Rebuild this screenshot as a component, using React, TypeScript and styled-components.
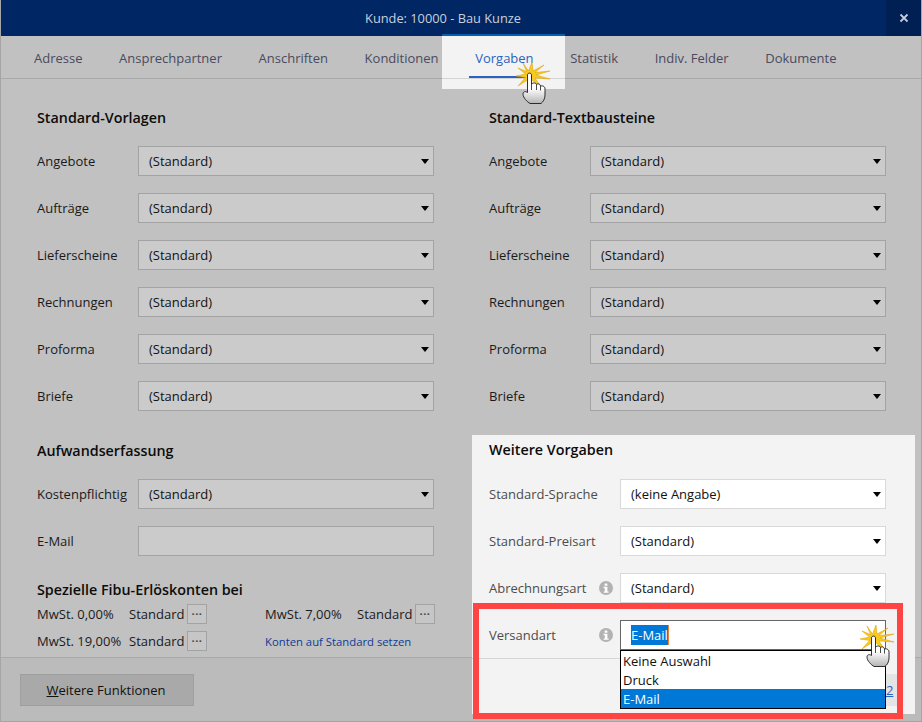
import React from "react";
import styled, { createGlobalStyle } from "styled-components";

const GlobalStyle = createGlobalStyle`
  html, body {
    margin: 0;
    padding: 0;
    background: #c1c1c1;
  }
  body {
    font-family: "Open Sans", "Noto Sans", sans-serif;
    font-size: 13px;
    color: #111;
  }
`;

const Window = styled.div`
  position: relative;
  width: 922px;
  height: 722px;
  overflow: hidden;
  display: flex;
  flex-direction: column;
  box-sizing: border-box;
  background: #c1c1c1;
  border-left: 1px solid #a5a5a5;
  border-right: 1px solid #a5a5a5;
  border-bottom: 1px solid #a5a5a5;
`;

const TitleBar = styled.header`
  height: 36px;
  margin: 0 -1px;
  padding-right: 36px;
  flex: none;
  display: flex;
  align-items: center;
  justify-content: center;
  position: relative;
  background: #002663;
  color: #c9d0dc;
  font-size: 12.8px;
`;

const CloseButton = styled.div`
  position: absolute;
  right: 0;
  top: 0;
  width: 36px;
  height: 36px;
  display: flex;
  align-items: center;
  justify-content: center;
  background: #001f52;
`;

const TabBar = styled.nav`
  height: 42px;
  flex: none;
  display: flex;
  align-items: center;
  gap: 36.6px;
  padding-left: 33px;
  border-bottom: 1px solid #a9a9a9;
  box-sizing: content-box;
`;

const Tab = styled.div<{ $active?: boolean }>`
  position: relative;
  z-index: ${(p) => (p.$active ? 2 : 0)};
  color: ${(p) => (p.$active ? "#2a63c0" : "#4a4a5e")};
  font-size: 13px;
  line-height: 40px;
  padding-top: 2px;
`;

const TabUnderline = styled.span`
  position: absolute;
  left: -6px;
  right: -6px;
  bottom: 0;
  height: 2px;
  background: #2a63c0;
`;

const Body = styled.main`
  flex: 1;
  display: grid;
  grid-template-columns: 397px 1fr;
  column-gap: 55px;
  padding: 26px 35px 0 36px;
  min-height: 0;
`;

const Column = styled.section`
  display: flex;
  flex-direction: column;
  min-width: 0;
`;

const Heading = styled.h2`
  margin: 0;
  font-size: 14.3px;
  font-weight: 600;
  line-height: 26px;
  color: #0c0c0c;
`;

const FormGrid = styled.div`
  margin-top: 15px;
  display: flex;
  flex-direction: column;
  gap: 17px;
`;

const Row = styled.div`
  display: flex;
  align-items: center;
  height: 30px;
`;

const Label = styled.div`
  width: 101px;
  flex: none;
  color: #1a1a1a;
  white-space: nowrap;
`;

const SelectBox = styled.div<{ $lit?: boolean }>`
  flex: 1;
  height: 30px;
  box-sizing: border-box;
  display: flex;
  align-items: center;
  justify-content: space-between;
  padding: 0 4px 0 10px;
  background: ${(p) => (p.$lit ? "#ffffff" : "#cbcbcb")};
  border: 1px solid ${(p) => (p.$lit ? "#d9d9d9" : "#a3a3a3")};
  color: #111;
`;

const Caret = styled.span`
  width: 0;
  height: 0;
  border-left: 4.5px solid transparent;
  border-right: 4.5px solid transparent;
  border-top: 5px solid #000;
`;

const Section = styled.div<{ $top: number }>`
  margin-top: ${(p) => p.$top}px;
`;

const Fibu = styled.div`
  display: grid;
  grid-template-columns: 92px 58px 20px 58px 92px 58px 20px;
  row-gap: 7px;
  align-items: center;
  margin-top: 1px;
  color: #1a1a1a;
`;

const DotsButton = styled.div`
  width: 20px;
  height: 20px;
  box-sizing: border-box;
  border: 1px solid #a3a3a3;
  background: #c6c6c6;
  display: flex;
  align-items: center;
  justify-content: center;
  color: #444;
  font-size: 11px;
  font-weight: 700;
  line-height: 10px;
  letter-spacing: 0.6px;
`;

const FibuLink = styled.div`
  grid-column: 5 / 8;
  color: #103a96;
  font-size: 11.3px;
`;

const Footer = styled.footer`
  height: 63px;
  flex: none;
  display: flex;
  align-items: center;
  padding: 0 19px;
  border-top: 1px solid #a9a9a9;
  background: #bbbbbb;
`;

const FooterButton = styled.div`
  width: 174px;
  height: 32px;
  box-sizing: border-box;
  display: flex;
  align-items: center;
  justify-content: center;
  border: 1px solid #9f9f9f;
  background: #a9a9a9;
  color: #111;
  padding-right: 2px;
`;

const Mnemonic = styled.span`
  text-decoration: underline;
`;

/* lit callouts lying over the dimmed dialog */
const TabSpot = styled.div`
  position: absolute;
  left: 441px;
  top: 34px;
  width: 123px;
  height: 55px;
  background: #f3f3f3;
  border-top: 2px solid #0b5cad;
  box-sizing: border-box;
  z-index: 1;
`;

const TabSpotLine = styled.div`
  position: absolute;
  left: 441px;
  top: 78px;
  width: 123px;
  height: 1px;
  background: #d4d4d4;
  z-index: 1;
`;

const PanelSpot = styled.aside`
  position: absolute;
  left: 471px;
  top: 435px;
  width: 443px;
  height: 279px;
  background: #f3f3f3;
  box-sizing: border-box;
  padding: 2px 29px 0 17px;
  z-index: 1;
`;

const PanelRows = styled.div`
  margin-top: 16px;
  display: flex;
  flex-direction: column;
  gap: 17px;
`;

const PanelLabel = styled.div`
  width: 110px;
  flex: none;
  color: #4c4c4c;
  white-space: nowrap;
`;

const InfoSlot = styled.div`
  width: 21px;
  flex: none;
  display: flex;
  justify-content: flex-start;
`;

const OpenSelect = styled.div`
  position: relative;
  flex: 1;
  height: 30px;
  box-sizing: border-box;
  padding: 0 10px;
  display: flex;
  align-items: center;
  background: #fff;
  border: 1px solid #666;
`;

const Selected = styled.span`
  background: #0078d7;
  color: #fff;
  line-height: 20px;
  border-right: 1px solid #e8843a;
`;

const Dropdown = styled.ul`
  position: absolute;
  left: -1px;
  right: -1px;
  top: 29px;
  margin: 0;
  padding: 0;
  list-style: none;
  background: #fff;
  border: 1px solid #000;
  z-index: 4;
`;

const Option = styled.li<{ $active?: boolean }>`
  height: 19px;
  line-height: 20px;
  padding-left: 2px;
  background: ${(p) => (p.$active ? "#0078d7" : "transparent")};
  color: ${(p) => (p.$active ? "#fff" : "#111")};
`;

const PanelDivider = styled.div`
  position: absolute;
  left: 0;
  top: 223px;
  width: 150px;
  height: 1px;
  background: #d6d6d6;
`;

const HelpButton = styled.div`
  position: absolute;
  right: 18px;
  top: 239px;
  height: 32px;
  width: 12px;
  background: #e4e4e4;
  display: flex;
  align-items: center;
  justify-content: flex-start;
  padding-left: 1px;
  box-sizing: border-box;
  color: #2a63c0;
  text-decoration: underline;
`;

const RedFrame = styled.div`
  position: absolute;
  left: 472px;
  top: 603px;
  width: 430px;
  height: 116px;
  box-sizing: border-box;
  border: 6px solid #ff4444;
  z-index: 3;
`;

const CursorMark = styled.svg<{ $x: number; $y: number }>`
  position: absolute;
  left: ${(p) => p.$x}px;
  top: ${(p) => p.$y}px;
  z-index: 6;
`;

const InfoIcon = () => (
  <svg width="14" height="14" viewBox="0 0 14 14">
    <circle cx="7" cy="7" r="7" fill="#b2b2b2" />
    <rect x="5.600" y="2.400" width="2.800" height="2.400" rx="0.6" fill="#fff" />
    <path d="M4.600 5.800h3.800v4.600h1.200v1.400H4.600v-1.400h1.200V7.200H4.600z" fill="#fff" />
  </svg>
);

const ClickCursor = ({ x, y }: { x: number; y: number }) => (
  <CursorMark $x={x} $y={y} width="36" height="43" viewBox="0 0 36 43">
    <path
      d="M8 1 L13.500 9 L17 0 L18 9 L29 3 L20 10.500 L35 9 L21 13 L35 17 L20 16 L26 25 L17 18 L14 26 L12.500 18 L3 24 L10.500 15.500 L1 14 L10.500 12 L3 6 L11.500 9.500 Z"
      fill="#f8c91f"
      stroke="#d99f00"
      strokeWidth="0.5"
    />
    <defs>
      <linearGradient id="handFill" x1="0" y1="0" x2="0" y2="1">
        <stop offset="0.5" stopColor="#ffffff" />
        <stop offset="1" stopColor="#b4b4b4" />
      </linearGradient>
    </defs>
    <path
      d="M12.500 13 C12.500 10.500 16.500 10.500 16.500 13 L16.500 22 C18 20.500 21 20.500 21.500 22.500 C22.500 21.500 25 21.500 25.500 24 C27 23.500 30 24 30 27 L30 33 C30 37 28 40 26 41.500 L15 41.500 C12.500 40 8 36 8 32 C8 29.500 10.500 29 12.500 30.500 Z"
      fill="url(#handFill)"
      stroke="#1c1c1c"
      strokeWidth="0.9"
      strokeLinejoin="round"
    />
    <path d="M16.500 22v6M21.500 22.500v5.500M25.500 24v4.500" stroke="#1c1c1c" strokeWidth="0.8" fill="none" />
  </CursorMark>
);

const vorlagen = ["Angebote", "Aufträge", "Lieferscheine", "Rechnungen", "Proforma", "Briefe"];

export default function App() {
  return (
    <Window>
      <GlobalStyle />
      <TitleBar>
        Kunde: 10000 - Bau Kunze
        <CloseButton>
          <svg width="10" height="10" viewBox="0 0 10 10">
            <path d="M1.500 1.500l7 7M8.500 1.500l-7 7" stroke="#c3cddc" strokeWidth="1.800" />
          </svg>
        </CloseButton>
      </TitleBar>
      <TabBar>
        <Tab>Adresse</Tab>
        <Tab>Ansprechpartner</Tab>
        <Tab>Anschriften</Tab>
        <Tab>Konditionen</Tab>
        <Tab $active>
          Vorgaben
          <TabUnderline />
        </Tab>
        <Tab>Statistik</Tab>
        <Tab>Indiv. Felder</Tab>
        <Tab>Dokumente</Tab>
      </TabBar>
      <Body>
        <Column>
          <Heading>Standard-Vorlagen</Heading>
          <FormGrid>
            {vorlagen.map((name) => (
              <Row key={name}>
                <Label>{name}</Label>
                <SelectBox>
                  (Standard)
                  <Caret />
                </SelectBox>
              </Row>
            ))}
          </FormGrid>
          <Section $top={27}>
            <Heading>Aufwandserfassung</Heading>
            <FormGrid>
              <Row>
                <Label>Kostenpflichtig</Label>
                <SelectBox>
                  (Standard)
                  <Caret />
                </SelectBox>
              </Row>
              <Row>
                <Label>E-Mail</Label>
                <SelectBox />
              </Row>
            </FormGrid>
          </Section>
          <Section $top={21}>
            <Heading>Spezielle Fibu-Erlöskonten bei</Heading>
            <Fibu>
              <span>MwSt. 0,00%</span>
              <span>Standard</span>
              <DotsButton>···</DotsButton>
              <span />
              <span>MwSt. 7,00%</span>
              <span>Standard</span>
              <DotsButton>···</DotsButton>
              <span>MwSt. 19,00%</span>
              <span>Standard</span>
              <DotsButton>···</DotsButton>
              <span />
              <FibuLink>Konten auf Standard setzen</FibuLink>
            </Fibu>
          </Section>
        </Column>
        <Column>
          <Heading>Standard-Textbausteine</Heading>
          <FormGrid>
            {vorlagen.map((name) => (
              <Row key={name}>
                <Label>{name}</Label>
                <SelectBox>
                  (Standard)
                  <Caret />
                </SelectBox>
              </Row>
            ))}
          </FormGrid>
        </Column>
      </Body>
      <Footer>
        <FooterButton>
          <span>
            <Mnemonic>W</Mnemonic>eitere Funktionen
          </span>
        </FooterButton>
      </Footer>

      <TabSpot />
      <TabSpotLine />
      <PanelSpot>
        <PanelDivider />
        <HelpButton>2</HelpButton>
        <Heading>Weitere Vorgaben</Heading>
        <PanelRows>
          <Row>
            <PanelLabel>Standard-Sprache</PanelLabel>
            <InfoSlot />
            <SelectBox $lit>
              (keine Angabe)
              <Caret />
            </SelectBox>
          </Row>
          <Row>
            <PanelLabel>Standard-Preisart</PanelLabel>
            <InfoSlot />
            <SelectBox $lit>
              (Standard)
              <Caret />
            </SelectBox>
          </Row>
          <Row>
            <PanelLabel>Abrechnungsart</PanelLabel>
            <InfoSlot>
              <InfoIcon />
            </InfoSlot>
            <SelectBox $lit>
              (Standard)
              <Caret />
            </SelectBox>
          </Row>
          <Row>
            <PanelLabel>Versandart</PanelLabel>
            <InfoSlot>
              <InfoIcon />
            </InfoSlot>
            <OpenSelect>
              <Selected>E-Mail</Selected>
              <Dropdown>
                <Option>Keine Auswahl</Option>
                <Option>Druck</Option>
                <Option $active>E-Mail</Option>
              </Dropdown>
            </OpenSelect>
          </Row>
        </PanelRows>
      </PanelSpot>
      <RedFrame />
      <ClickCursor x={514} y={62} />
      <ClickCursor x={858} y={625} />
    </Window>
  );
}
